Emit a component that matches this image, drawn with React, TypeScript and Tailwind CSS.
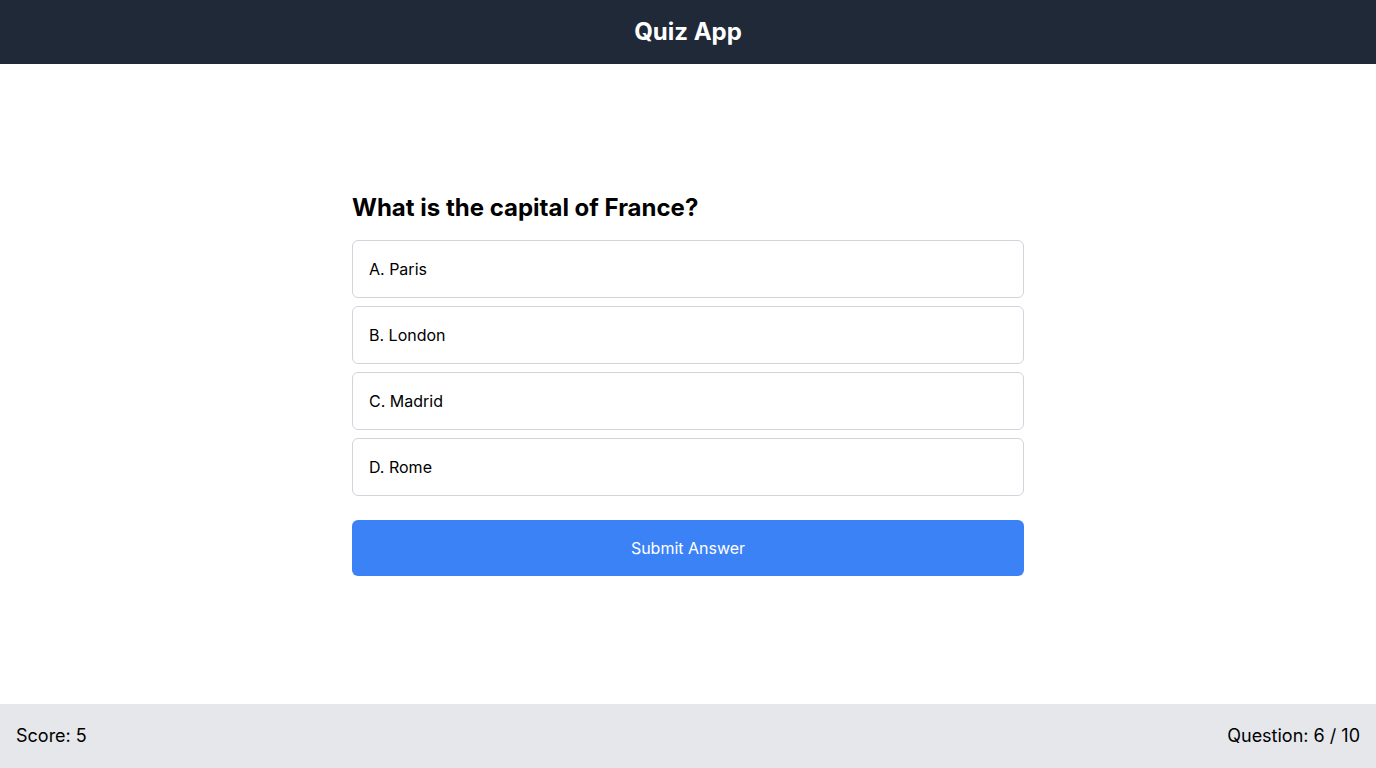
import { useState } from "react";

const options = ["A. Paris", "B. London", "C. Madrid", "D. Rome"];

export default function App() {
  const [selected, setSelected] = useState<string | null>(null);

  return (
    <div className="flex min-h-screen flex-col bg-white font-['Inter',sans-serif] text-black">
      <header className="bg-[#1f2937] p-4 text-center text-white">
        <h1 className="text-2xl font-bold">Quiz App</h1>
      </header>
      <main className="flex flex-1 items-center justify-center p-4">
        <div className="w-full max-w-2xl">
          <h2 className="mb-4 text-2xl font-bold">What is the capital of France?</h2>
          <div className="mb-6 flex flex-col gap-2">
            {options.map((option) => (
              <button
                key={option}
                type="button"
                aria-pressed={selected === option}
                onClick={() => setSelected(option)}
                className="w-full rounded-md border border-[#d1d5db] p-4 text-left text-base hover:bg-[#f3f4f6] aria-pressed:bg-[#dbeafe]"
              >
                {option}
              </button>
            ))}
          </div>
          <button
            type="button"
            className="w-full rounded-md bg-[#3b82f6] p-4 text-base text-white hover:bg-[#2563eb]"
          >
            Submit Answer
          </button>
        </div>
      </main>
      <footer className="flex items-center justify-between bg-[#e5e7eb] px-4 py-[18px] text-lg">
        <p>Score: 5</p>
        <p>Question: 6 / 10</p>
      </footer>
    </div>
  );
}
